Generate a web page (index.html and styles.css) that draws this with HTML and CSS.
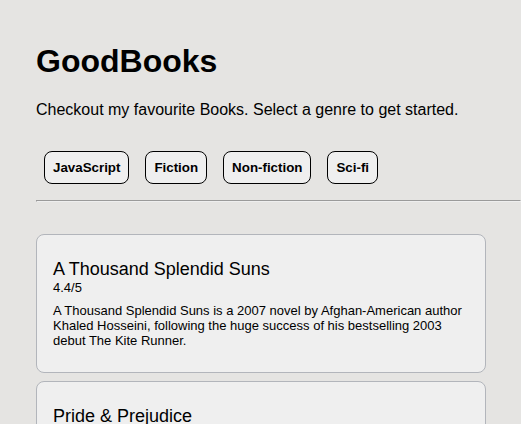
FILE: index.html
```html
<!DOCTYPE html>
<html lang="en">
<head>
<meta charset="utf-8">
<title>GoodBooks</title>
<link rel="stylesheet" href="styles.css">
</head>
<body>
<main class="app">
  <h1 class="title">GoodBooks</h1>
  <p class="intro">Checkout my favourite Books. Select a genre to get started.</p>
  <div class="genres">
    <button class="genre" type="button">JavaScript</button>
    <button class="genre" type="button">Fiction</button>
    <button class="genre" type="button">Non-fiction</button>
    <button class="genre" type="button">Sci-fi</button>
  </div>
  <hr class="rule">
  <ul class="books">
    <li class="book">
      <h2 class="book-name">A Thousand Splendid Suns</h2>
      <div class="book-rating">4.4/5</div>
      <p class="book-text">A Thousand Splendid Suns is a 2007 novel by Afghan-American author Khaled Hosseini, following the huge success of his bestselling 2003 debut The Kite Runner.</p>
    </li>
    <li class="book">
      <h2 class="book-name">Pride &amp; Prejudice</h2>
    </li>
  </ul>
</main>
</body>
</html>
```

FILE: styles.css
```css
* {
  box-sizing: border-box;
}

body {
  margin: 0;
  height: 100vh;
  overflow: hidden;
  background: #e5e4e2;
  color: #000;
  font-family: "Liberation Sans", Arial, sans-serif;
}

.app {
  padding: 42px 0 0 36px;
}

.title {
  margin: 0;
  font-size: 32px;
  line-height: 38px;
}

.intro {
  margin: 20px 0 0;
  font-size: 16px;
  line-height: 20px;
}

.genres {
  display: flex;
  gap: 16px;
  margin: 31px 8px 0;
}

.genre {
  padding: 8px;
  border: 1px solid #000;
  border-radius: 8px;
  background: #efefef;
  color: #000;
  font-family: inherit;
  font-weight: 700;
  line-height: 15px;
}

.rule {
  margin: 16px 0 0;
  border: 1px solid;
  border-color: #9a9a9a #eee #eee #9a9a9a;
}

.books {
  display: grid;
  gap: 8px;
  max-width: 450px;
  margin: 32px 0 0;
  padding: 0;
  list-style: none;
}

.book {
  padding: 24px 16px;
  border: 1px solid #b2b5bb;
  border-radius: 8px;
  background: #efefef;
}

.book-name {
  margin: 0;
  font-size: 18px;
  font-weight: 400;
  line-height: 21px;
}

.book-rating {
  font-size: 13px;
  line-height: 15px;
}

.book-text {
  margin: 8px 0 0;
  font-size: 13px;
  line-height: 15px;
}
```
